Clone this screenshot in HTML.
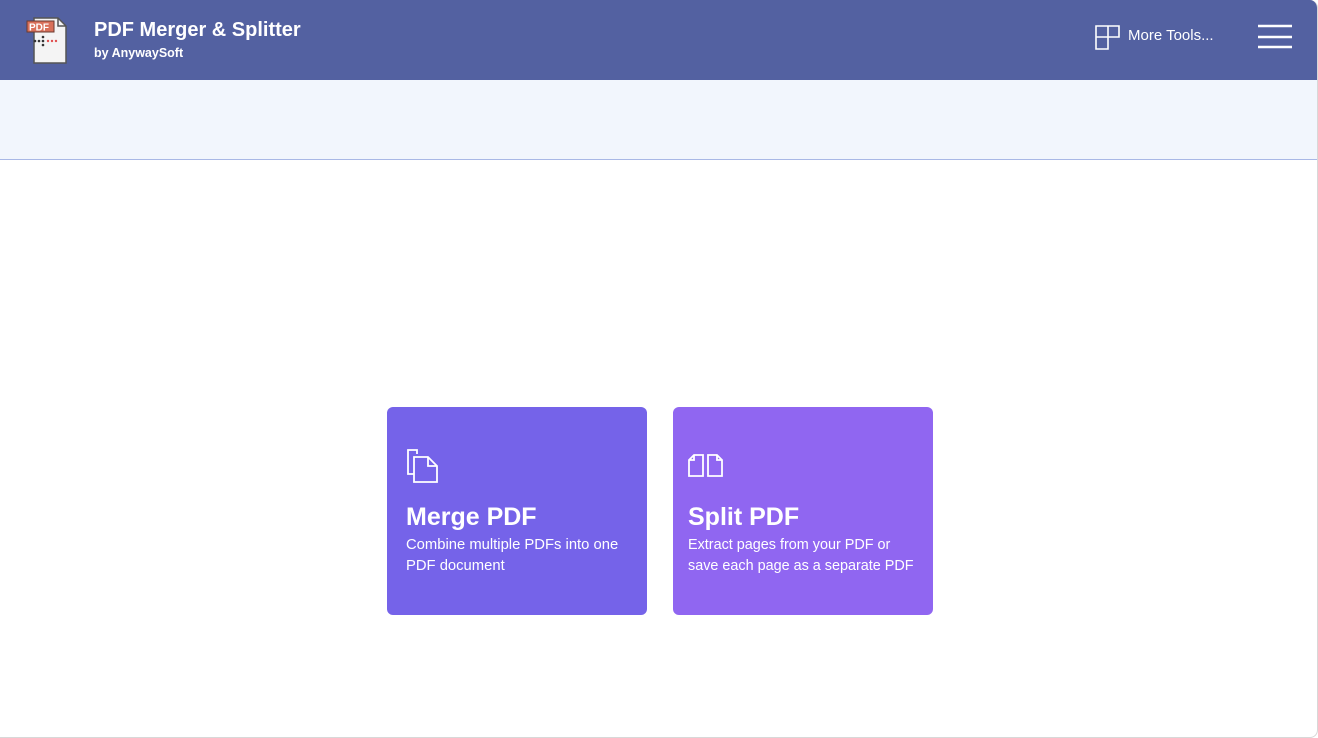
<!DOCTYPE html>
<html><head><meta charset="utf-8"><style>
*{margin:0;padding:0;box-sizing:border-box}
body{width:1318px;height:738px;background:#fff;font-family:"Segoe UI","Liberation Sans",sans-serif;overflow:hidden;position:relative}
.frame{position:absolute;left:0;top:0;width:1318px;height:738px;border-right:1px solid #d8d8d8;border-bottom:1px solid #d8d8d8;border-radius:0 8px 8px 0;overflow:hidden;background:#fff}
.hdr{position:absolute;left:0;top:0;width:100%;height:80px;background:#5361a1}
.band{position:absolute;left:0;top:80px;width:100%;height:80px;background:#f2f6fd;border-bottom:1px solid #a9b8e6}
.t1{position:absolute;left:94px;top:19px;color:#fff;font-size:20px;font-weight:600}
.t2{position:absolute;left:94px;top:46px;color:#fff;font-size:12.5px;font-weight:600}
.mt{position:absolute;left:1128px;top:27px;color:#fff;font-size:15px}
.card{position:absolute;top:407px;width:260px;height:208px;border-radius:6px;color:#fff}
.card h2{position:absolute;top:96px;font-size:25px;font-weight:600}
.card p{position:absolute;top:128px;font-size:15px;line-height:20.5px;white-space:nowrap}
</style></head><body><div class="frame">
<div class="hdr">
<svg style="position:absolute;left:26px;top:15px" width="44" height="50" viewBox="0 0 44 50">
<path d="M8 3h24l8 8v37H8z" fill="#f4f4f4" stroke="#555" stroke-width="1.5"/>
<path d="M32 3v8h8" fill="none" stroke="#555" stroke-width="1.5"/>
<rect x="1" y="6" width="27" height="11" fill="#d9705a" stroke="#6a3a30"/>
<text x="3" y="15.5" font-size="10" fill="#fff" font-family="Liberation Sans" font-weight="bold">PDF</text>
<g fill="#333"><circle cx="17" cy="22" r="1.3"/><circle cx="13" cy="26" r="1.3"/><circle cx="17" cy="26" r="1.3"/><circle cx="17" cy="30" r="1.3"/><circle cx="9" cy="26" r="1.3"/></g>
<g fill="#e05050"><circle cx="22" cy="26" r="1.2"/><circle cx="26" cy="26" r="1.2"/><circle cx="30" cy="26" r="1.2"/></g>
</svg>
<div class="t1">PDF Merger &amp; Splitter</div>
<div class="t2">by AnywaySoft</div>
<svg style="position:absolute;left:1095px;top:25px" width="26" height="25" viewBox="0 0 26 25" fill="none" stroke="#fff" stroke-width="1.6"><path d="M1 1h23v11H13v12H1z M1 12h12 M13 1v11"/></svg>
<div class="mt">More Tools...</div>
<svg style="position:absolute;left:1258px;top:24px" width="34" height="26" fill="none" stroke="#fff" stroke-width="2.4"><path d="M0 2h34M0 13h34M0 23h34"/></svg>
</div>
<div class="band"></div>
<div class="card" style="left:387px;background:#7563e9">
<svg style="position:absolute;left:20px;top:42px" width="32" height="34" viewBox="0 0 32 34" fill="none" stroke="#fff" stroke-width="1.8"><path d="M10 5V1H1v24h6"/><path d="M7 8h14l9 9v16H7z"/><path d="M21 8v9h9"/></svg>
<h2 style="left:19px">Merge PDF</h2>
<p style="left:19px;font-size:14.8px">Combine multiple PDFs into one<br>PDF document</p>
</div>
<div class="card" style="left:673px;background:#9066f1">
<svg style="position:absolute;left:15px;top:47px" width="36" height="23" viewBox="0 0 36 23" fill="none" stroke="#fff" stroke-width="1.8"><path d="M6 1h9v21H1V6z M6 1v5H1"/><path d="M20 1h9l5 5v16H20z M29 1v5h5"/></svg>
<h2 style="left:15px">Split PDF</h2>
<p style="left:15px;font-size:14.4px">Extract pages from your PDF or<br>save each page as a separate PDF</p>
</div>
</div></body></html>
